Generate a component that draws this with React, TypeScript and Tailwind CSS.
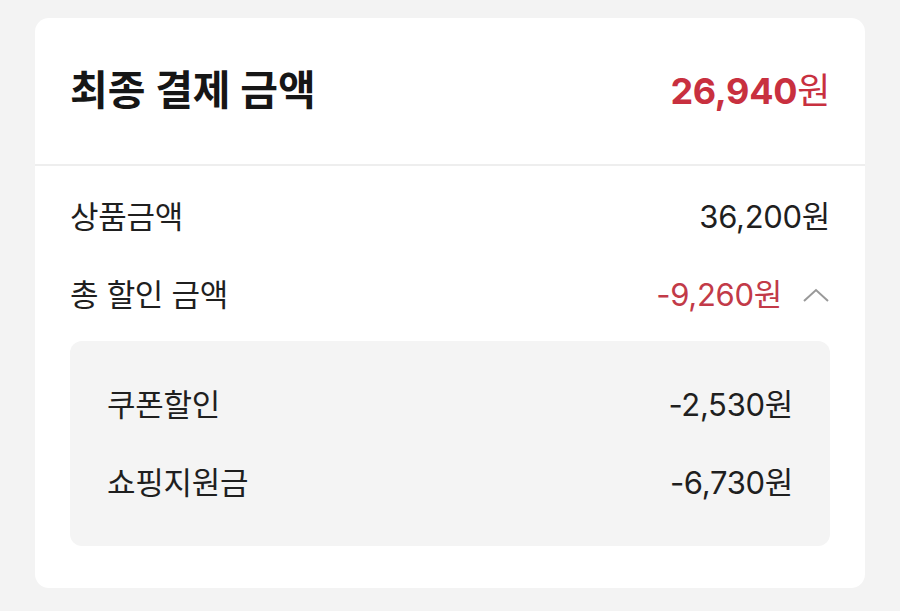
import React from "react";

const font = { fontFamily: "Inter, 'Noto Sans CJK KR', 'Noto Sans', sans-serif" };

const Row = ({ label, value, className }: { label: string; value: string; className?: string }) => (
  <div className={`flex items-center justify-between ${className ?? ""}`}>
    <span>{label}</span>
    <span>{value}</span>
  </div>
);

export default function App() {
  return (
    <div className="w-[900px] h-[611px] bg-[#f3f3f3] pt-[18px] px-[35px]" style={font}>
      <div className="bg-white rounded-[14px] h-[570px]">
        <div className="h-[148px] flex items-center justify-between px-[35px] border-b-2 border-[#eeeeee]">
          <h1 className="text-[41px] font-bold text-[#161616]">최종 결제 금액</h1>
          <span className="text-[36px] font-bold text-[#c8303f] tracking-[-0.3px]">
            26,940<span className="font-normal">원</span>
          </span>
        </div>
        <div className="px-[35px] pt-[31px] text-[31px] text-[#1f1f1f] tracking-[-0.3px]">
          <Row label="상품금액" value="36,200원" className="h-[40px]" />
          <div className="flex items-center justify-between h-[40px] mt-[38px]">
            <span>총 할인 금액</span>
            <div className="flex items-center gap-[20px]">
              <span className="text-[#c23a48]">-9,260원</span>
              <svg width="28" height="16" viewBox="0 0 28 16" fill="none">
                <path d="M2 14 L14 3 L26 14" stroke="#999999" strokeWidth="2" />
              </svg>
            </div>
          </div>
          <div className="mt-[26px] bg-[#f4f4f4] rounded-[12px] h-[205px] px-[37px] pt-[44px]">
            <Row label="쿠폰할인" value="-2,530원" className="h-[40px]" />
            <Row label="쇼핑지원금" value="-6,730원" className="h-[40px] mt-[38px]" />
          </div>
        </div>
      </div>
    </div>
  );
}
